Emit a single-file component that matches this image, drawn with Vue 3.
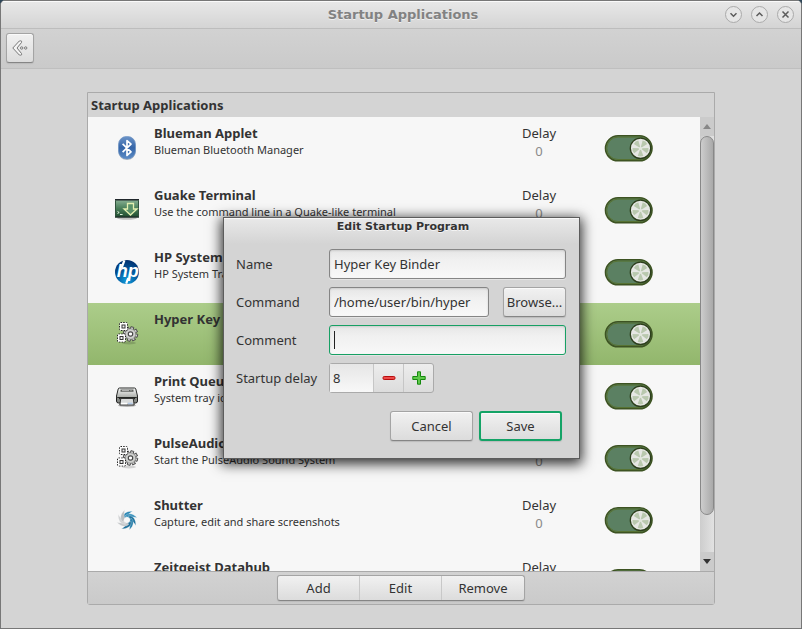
<script setup>
import { ref } from 'vue'

const apps = ref([
  { id: 'blueman', icon: 'bluetooth', name: 'Blueman Applet', note: 'Blueman Bluetooth Manager', delay: 0, on: true },
  { id: 'guake', icon: 'terminal', name: 'Guake Terminal', note: 'Use the command line in a Quake-like terminal', delay: 0, on: true },
  { id: 'hp', icon: 'hp', name: 'HP System Tray Service', note: 'HP System Tray Service', delay: 0, on: true },
  { id: 'hyper', icon: 'gears', name: 'Hyper Key Binder', note: '', delay: 8, on: true },
  { id: 'print', icon: 'printer', name: 'Print Queue Applet', note: 'System tray icon for managing print jobs', delay: 0, on: true },
  { id: 'pulse', icon: 'gears', name: 'PulseAudio Sound System', note: 'Start the PulseAudio Sound System', delay: 0, on: true },
  { id: 'shutter', icon: 'shutter', name: 'Shutter', note: 'Capture, edit and share screenshots', delay: 0, on: true },
  { id: 'zeitgeist', icon: '', name: 'Zeitgeist Datahub', note: '', delay: 0, on: true }
])
const selected = ref('hyper')
const form = ref({ name: 'Hyper Key Binder', command: '/home/user/bin/hyper', comment: '', delay: 8 })
const blades = [
  { angle: 0, fill: '#2a86b3' },
  { angle: 45, fill: '#3c93bd' },
  { angle: 90, fill: '#1f749f' },
  { angle: 135, fill: '#2b82ad' },
  { angle: 180, fill: '#1d6f9a' },
  { angle: 225, fill: '#c3c6c9' },
  { angle: 270, fill: '#d0d2d4' },
  { angle: 315, fill: '#b9bdc0' }
]
const teeth = [0, 45, 90, 135, 180, 225, 270, 315]
const rays = [36, 108, 180, 252, 324]
</script>

<template>
  <div class="window">
    <svg class="defs" width="0" height="0" aria-hidden="true">
      <defs>
        <linearGradient id="bt" x1="0" y1="0" x2="0" y2="1"><stop offset="0" stop-color="#6b93c8" /><stop offset=".5" stop-color="#3565a8" /><stop offset="1" stop-color="#5d8cc6" /></linearGradient>
        <linearGradient id="term" x1="0" y1="0" x2="0" y2="1"><stop offset="0" stop-color="#8fb59a" /><stop offset=".5" stop-color="#4a7f5a" /><stop offset="1" stop-color="#1d4a2d" /></linearGradient>
        <radialGradient id="hpg" cx=".5" cy=".85" r=".85"><stop offset="0" stop-color="#0fa0e0" /><stop offset=".5" stop-color="#045a9f" /><stop offset="1" stop-color="#032f6c" /></radialGradient>
        <linearGradient id="prn" x1="0" y1="0" x2="0" y2="1"><stop offset="0" stop-color="#fafafa" /><stop offset="1" stop-color="#a9aca8" /></linearGradient>
      </defs>
    </svg>

    <header class="titlebar">
      <h1>Startup Applications</h1>
      <div class="controls">
        <button type="button" aria-label="Minimize"><svg viewBox="0 0 17 17"><path d="M5.500 7.200l3 3 3-3" /></svg></button>
        <button type="button" aria-label="Maximize"><svg viewBox="0 0 17 17"><path d="M5.500 10l3-3 3 3" /></svg></button>
        <button type="button" aria-label="Close"><svg viewBox="0 0 17 17"><path d="M5.500 5.500l6 6m0-6l-6 6" /></svg></button>
      </div>
    </header>

    <div class="toolbar">
      <button type="button" class="btn back" aria-label="Back">
        <svg viewBox="0 0 16 16" width="16" height="16" fill="#f4f4f4" stroke="#777" stroke-width="1">
          <path d="M8.500.8q1.800 0 1 1.700L5 8l4.500 5.500q.8 1.700-1 1.700L7.300 15 .8 8 7.300 1z" />
          <circle cx="9.700" cy="8" r="1.200" /><circle cx="13.700" cy="8" r="1.200" />
        </svg>
      </button>
    </div>

    <main>
      <section class="panel">
        <h2>Startup Applications</h2>
        <div class="body">
          <ul class="list">
            <li v-for="app in apps" :key="app.id" :class="{ selected: app.id === selected }" @click="selected = app.id">
              <svg class="icon" viewBox="0 0 24 24" aria-hidden="true">
                <g v-if="app.icon === 'bluetooth'">
                  <rect x="3.500" y="1" width="17" height="23" rx="8" fill="#000" opacity=".18" />
                  <rect x="3.500" y=".5" width="17" height="22.500" rx="8" fill="url(#bt)" stroke="#6f94c4" stroke-width=".8" />
                  <path d="M7.600 7.800l8.400 8-4 3.700V4.500l4 3.700-8.400 8" fill="none" stroke="#fff" stroke-width="1.700" stroke-linejoin="round" />
                </g>
                <g v-else-if="app.icon === 'terminal'">
                  <ellipse cx="12" cy="20" rx="10" ry="1.700" fill="#999" opacity=".6" />
                  <rect x="0" y="1" width="24" height="18.500" fill="url(#term)" />
                  <path d="M0 1h24v1.500H0zM0 18.500h24v1H0z" fill="#20272b" />
                  <path d="M.5 2.500v16m23-16v16" stroke="#31523d" />
                  <path d="M12.500 5.500h6v5.500H22L15.500 17 9 11h3.500z" fill="#5a9169" stroke="#e3efb0" stroke-width="1.300" />
                  <path d="M2.500 13.500l1.700 1-1.700 1M5 16.500h2.600" fill="none" stroke="#dff0dc" />
                </g>
                <g v-else-if="app.icon === 'hp'">
                  <circle cx="12" cy="12" r="12" fill="url(#hpg)" />
                  <text x="1.800" y="17.300" font-family="Liberation Sans" font-size="18" font-style="italic" font-weight="bold" fill="#fff">hp</text>
                  <path d="M6.600 8L9.400.3M13.200 18l-2 5.700" stroke="#fff" stroke-width="2.200" />
                </g>
                <g v-else-if="app.icon === 'gears'">
                  <ellipse cx="14" cy="21" rx="7" ry="1.500" fill="#000" opacity=".15" />
                  <g transform="translate(15.500 12)">
                    <rect v-for="t in teeth" :key="t" x="-1.500" y="-7.200" width="3" height="4" fill="#d0d0d0" stroke="#4c4c4c" stroke-width=".9" :transform="`rotate(${t + 15})`" />
                    <circle r="5.200" fill="#cfd0ce" stroke="#777" stroke-width=".6" />
                    <circle r="2.200" fill="#fff" stroke="#444" stroke-width="1.200" />
                  </g>
                  <g v-for="c in [[8.500, 4.500], [6.500, 16]]" :key="c[1]" :transform="`translate(${c[0]} ${c[1]})`">
                    <rect x="-4" y="-4" width="8" height="8" rx="1" fill="#fff" stroke="#222" stroke-width="1" stroke-dasharray="1.500 1.200" />
                    <rect x="-3.300" y="-3.300" width="6.600" height="6.600" fill="#fff" />
                    <rect x="-1.500" y="-1.500" width="3" height="3" fill="#eee" stroke="#333" />
                  </g>
                </g>
                <g v-else-if="app.icon === 'printer'">
                  <ellipse cx="12" cy="21.500" rx="9" ry="1.500" fill="#999" opacity=".7" />
                  <rect x="1.500" y="11" width="21" height="8" rx="2" fill="#868985" stroke="#1e1e1e" />
                  <path d="M4.500 4h15q1 0 1.300 1l1.700 7q.2 1.500-1 1.500h-19q-1.200 0-1-1.500l1.700-7q.3-1 1.300-1z" fill="url(#prn)" stroke="#272927" />
                  <rect x="5.500" y="5.500" width="13" height="2.300" fill="#606360" /><path d="M7 6.600h7m1.500 0h1" stroke="#ddd" stroke-width=".7" />
                  <path d="M4 14.200h16" stroke="#252625" stroke-width="2" />
                  <path d="M5.800 14.500h12.400l1 6.500H4.800z" fill="#d9dbdb" stroke="#343534" />
                  <path d="M6 19.500h6" stroke="#fff" stroke-width="1.500" /><path d="M13 19.500h4.500" stroke="#b4cbe8" stroke-width="1.500" />
                </g>
                <g v-else-if="app.icon === 'shutter'" transform="translate(12 12)">
                  <path v-for="b in blades" :key="b.angle" d="M-4.200-1.500C-4.600-5.800-1-9 5.500-8.800 3.300-7.300 1.200-6-.2-2.800z" :fill="b.fill" stroke="#f7f7f7" stroke-width=".3" :transform="`rotate(${b.angle})`" />
                  <circle r="2.800" fill="#f7f7f7" />
                </g>
              </svg>
              <div class="text">
                <strong>{{ app.name }}</strong>
                <small>{{ app.note }}</small>
              </div>
              <div class="delay">
                <span>Delay</span>
                <span class="num">{{ app.delay }}</span>
              </div>
              <label class="switch" @click.stop>
                <input v-model="app.on" type="checkbox" :aria-label="app.name">
                <svg viewBox="0 0 49 27" width="49" height="27">
                  <rect x="1.500" y=".8" width="46.500" height="25" rx="12.500" fill="#5b8062" stroke="#3d5322" stroke-width="1.600" />
                  <rect x="2.800" y="2.100" width="43.900" height="22.400" rx="11.200" fill="none" stroke="#577333" stroke-width="1" />
                  <g :transform="app.on ? 'translate(36.500 13.300)' : 'translate(12.500 13.300)'">
                    <circle r="10.200" fill="#e6e7e4" stroke="#2c3e1c" stroke-width="1.300" />
                    <path v-for="r in rays" :key="r" d="M0 0L-2.800-7.500Q0-9 2.800-7.500z" fill="#b9c8ae" :transform="`rotate(${r})`" />
                    <circle r="1.600" fill="#e2e6de" />
                  </g>
                </svg>
              </label>
            </li>
          </ul>
          <div class="scrollbar" aria-hidden="true">
            <div class="arrow"><svg viewBox="0 0 8 5"><path d="M0 5l4-5 4 5z" fill="#888" /></svg></div>
            <div class="track"><div class="thumb"></div></div>
            <div class="arrow down"><svg viewBox="0 0 8 5"><path d="M0 0h8L4 5z" fill="#333" /></svg></div>
          </div>
        </div>
        <footer>
          <div class="group">
            <button type="button">Add</button>
            <button type="button">Edit</button>
            <button type="button">Remove</button>
          </div>
        </footer>
      </section>
    </main>

    <form class="dialog" role="dialog" aria-labelledby="dialog-title" @submit.prevent>
      <h3 id="dialog-title">Edit Startup Program</h3>
      <div class="fields">
        <label for="name">Name</label>
        <input id="name" v-model="form.name" class="entry" type="text">
        <label for="command">Command</label>
        <div class="pair">
          <input id="command" v-model="form.command" class="entry" type="text">
          <button type="button" class="btn">Browse...</button>
        </div>
        <label for="comment">Comment</label>
        <div class="focused">
          <input id="comment" v-model="form.comment" class="entry" type="text">
          <span class="caret"></span>
        </div>
        <label for="delay">Startup delay</label>
        <div class="spin">
          <input id="delay" v-model="form.delay" type="text" inputmode="numeric">
          <button type="button" aria-label="Decrease" @click="form.delay = Math.max(0, form.delay - 1)">
            <svg viewBox="0 0 14 14" width="14" height="14"><rect x="1" y="5.500" width="12" height="3" rx="1.200" fill="#ec4a4a" stroke="#b80d0d" /></svg>
          </button>
          <button type="button" aria-label="Increase" @click="form.delay++">
            <svg viewBox="0 0 14 14" width="14" height="14"><path d="M5.500.8h3v4.700h4.700v3H8.500v4.700h-3V8.500H.8v-3h4.700z" fill="#60c94c" stroke="#16890f" stroke-linejoin="round" /></svg>
          </button>
        </div>
      </div>
      <div class="actions">
        <button type="button" class="btn">Cancel</button>
        <button type="submit" class="btn primary">Save</button>
      </div>
    </form>
  </div>
</template>

<style>
body {
  background: #2e4658;
}
</style>

<style scoped>
* {
  box-sizing: border-box;
}
.window {
  position: relative;
  display: flex;
  flex-direction: column;
  height: 100vh;
  overflow: hidden;
  border: 1px solid #777;
  border-radius: 5px 5px 0 0;
  background: #d4d4d4;
  color: #333;
  font: 13px/18px "Noto Sans", sans-serif;
}
.defs {
  position: absolute;
}
h1, h2, h3, ul {
  margin: 0;
  padding: 0;
}
button, input {
  margin: 0;
  color: inherit;
  font: inherit;
}
.titlebar {
  display: grid;
  grid-template-columns: 1fr auto 1fr;
  align-items: center;
  height: 28px;
  padding: 0 7px;
  border-bottom: 1px solid #bdbdbd;
  background: linear-gradient(#e8e8e8, #d4d4d4);
  box-shadow: inset 0 1px #fafafa;
}
h1 {
  grid-column: 2;
  padding-left: 4px;
  color: #828282;
  font: bold 13px/18px "DejaVu Sans", sans-serif;
  text-shadow: 0 1px #eee;
}
.controls {
  display: flex;
  gap: 9px;
  justify-content: flex-end;
}
.controls button {
  width: 17px;
  height: 17px;
  padding: 0;
  border: 1px solid #aaa;
  border-radius: 50%;
  background: #e6e6e6;
}
.controls svg {
  display: block;
  width: 17px;
  height: 17px;
  margin: -1px;
  fill: none;
  stroke: #5c5c5c;
  stroke-width: 1.5;
}
.toolbar {
  height: 40px;
  padding: 4px 5px;
  border-bottom: 1px solid #bfbfbf;
  background: linear-gradient(#d2d2d2, #cacaca);
}
.btn {
  height: 30px;
  padding: 0;
  border: 1px solid #a4a4a4;
  border-bottom-color: #858585;
  border-radius: 3px;
  background: linear-gradient(#f1f1f1, #dcdcdc);
  box-shadow: inset 0 1px #fafafa, 0 1px 1px #bbb;
}
.back {
  display: grid;
  place-items: center;
  width: 28px;
}
main {
  display: flex;
  flex: 1;
  min-height: 0;
  padding: 23px 86px;
}
.panel {
  display: flex;
  flex: 1;
  flex-direction: column;
  min-width: 0;
  border: 1px solid #aaa;
  border-radius: 0 0 3px 3px;
}
h2 {
  height: 24px;
  padding: 0 3px;
  font-size: 13px;
  line-height: 24px;
}
.body {
  display: flex;
  flex: 1;
  min-height: 0;
  border-bottom: 1px solid #aaa;
}
.list {
  flex: 1;
  overflow: hidden;
  background: #f7f7f7;
  list-style: none;
}
.list li {
  display: flex;
  align-items: center;
  height: 62px;
  padding: 0 47px 0 27px;
}
.list .selected {
  background: linear-gradient(#accd8a, #92b66c);
}
.icon {
  flex: none;
  width: 24px;
  height: 24px;
}
.text, .delay {
  display: flex;
  flex-direction: column;
  align-self: stretch;
  padding-top: 7px;
}
.text {
  flex: 1;
  padding-left: 15px;
}
.text small {
  font-size: 11px;
  line-height: 16px;
}
.delay {
  align-items: center;
  width: 34px;
  margin-right: 48px;
}
.num {
  color: #8a8a8a;
}
.switch {
  position: relative;
  height: 27px;
}
.switch input {
  position: absolute;
  inset: 0;
  width: 100%;
  height: 100%;
  opacity: 0;
}
.switch svg {
  display: block;
}
.scrollbar {
  display: flex;
  flex-direction: column;
  width: 14px;
  background: linear-gradient(90deg, #cdcdcd, #e2e2e2);
}
.arrow {
  display: grid;
  place-items: center;
  height: 19px;
  background: #cbcbcb;
}
.arrow svg {
  width: 8px;
  height: 5px;
}
.track {
  flex: 1;
}
.thumb {
  height: 91%;
  border: 1px solid #888;
  border-radius: 7px;
  background: linear-gradient(90deg, #cdcdcd, #a9a9a9);
}
footer {
  display: flex;
  justify-content: center;
  padding: 3px;
  background: linear-gradient(#d2d2d2, #cacaca);
}
.group {
  display: flex;
  border: 1px solid #a4a4a4;
  border-bottom-color: #858585;
  border-radius: 3px;
  background: linear-gradient(#f1f1f1, #dcdcdc);
  box-shadow: 0 1px 1px #bbb;
}
.group button {
  width: 82px;
  height: 24px;
  padding: 0;
  border: 0;
  border-right: 1px solid #c8c8c8;
  background: none;
}
.group button:last-child {
  border-right: 0;
}
.dialog {
  position: absolute;
  top: 216px;
  left: 222px;
  width: 357px;
  padding: 0 13px 17px 12px;
  border: 1px solid #5c5c5c;
  background: linear-gradient(#e9e9e9, #d4d4d4 26px);
  box-shadow: inset 0 1px #f8f8f8, 0 3px 12px 2px rgba(0, 0, 0, 0.8);
}
h3 {
  margin-bottom: 13px;
  padding-left: 4px;
  font: bold 11px/18px "DejaVu Sans", sans-serif;
  text-align: center;
  text-shadow: 0 1px #f4f4f4;
}
.fields {
  display: grid;
  grid-template-columns: 93px 1fr;
  row-gap: 8px;
  align-items: center;
}
.entry {
  display: block;
  width: 100%;
  min-width: 0;
  height: 30px;
  padding: 0 4px;
  border: 1px solid #858585;
  border-radius: 3px;
  outline: 0;
  background: linear-gradient(#e6e6e6, #f0f0f0 35%, #f8f8f8);
  box-shadow: inset 0 1px 2px #ccc, 0 1px #e4e4e4;
}
.pair {
  display: grid;
  grid-template-columns: 1fr 63px;
  gap: 14px;
}
.focused {
  position: relative;
}
.focused .entry {
  border-color: #17a064;
}
.caret {
  position: absolute;
  top: 6px;
  left: 5px;
  width: 1px;
  height: 18px;
  background: #222;
}
.spin {
  display: flex;
  justify-self: start;
  height: 30px;
  border: 1px solid #aaa;
  border-radius: 3px;
  background: linear-gradient(#ededed, #dcdcdc);
}
.spin input {
  width: 43px;
  padding: 0 3px;
  border: 0;
  outline: 0;
  background: linear-gradient(#e6e6e6, #f8f8f8);
}
.spin button {
  display: grid;
  place-items: center;
  width: 30px;
  padding: 0;
  border: 0;
  border-left: 1px solid #c6c6c6;
  background: none;
}
.actions {
  display: flex;
  gap: 6px;
  justify-content: flex-end;
  margin-top: 18px;
  padding-right: 4px;
}
.actions .btn {
  width: 83px;
}
.actions .primary {
  border: 2px solid #14a366;
}
</style>
